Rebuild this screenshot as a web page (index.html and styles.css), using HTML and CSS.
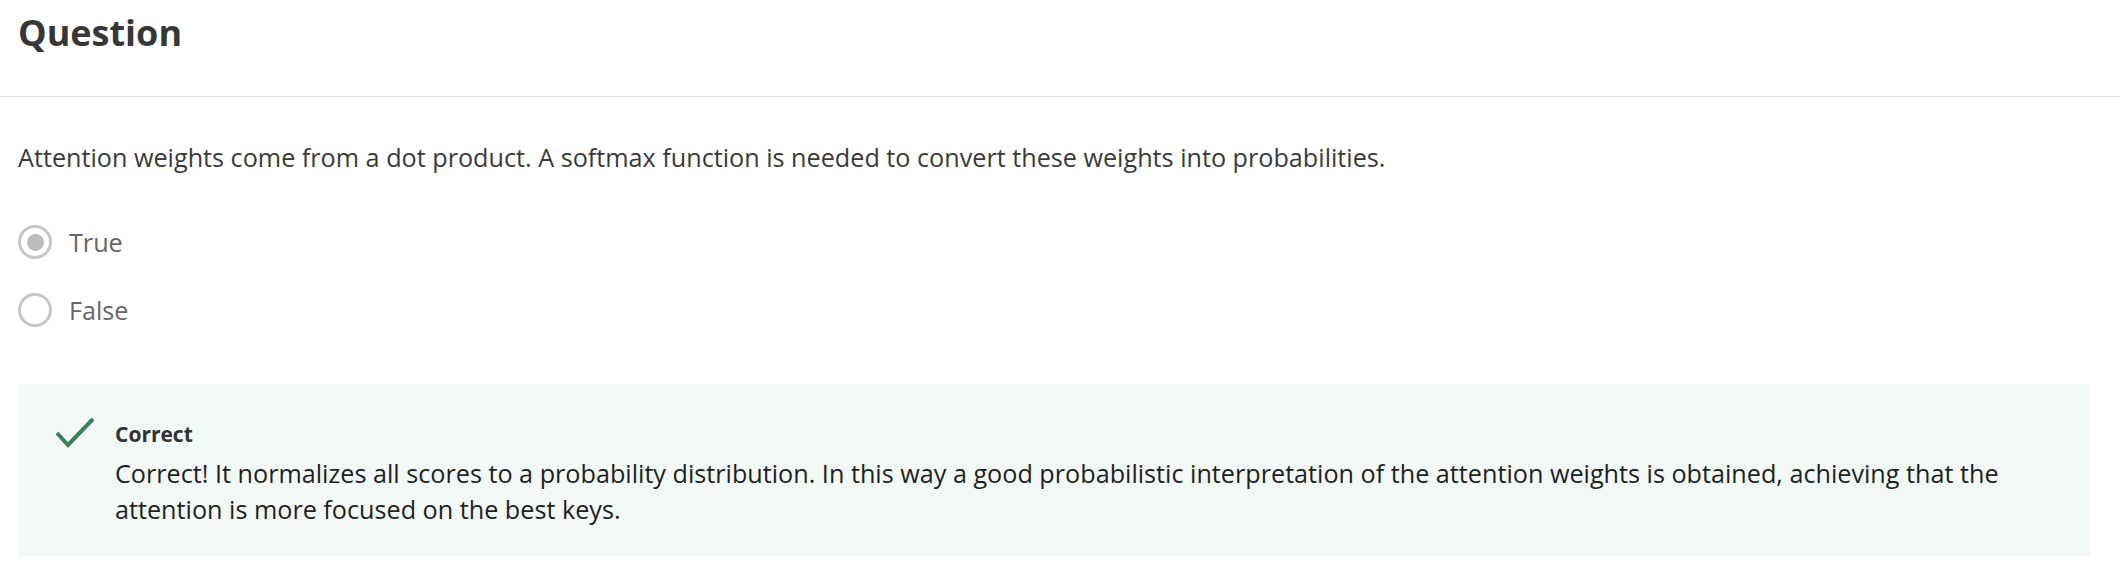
FILE: index.html
```html
<!DOCTYPE html>
<html lang="en">
<head>
<meta charset="utf-8">
<title>Question</title>
<link rel="stylesheet" href="styles.css">
</head>
<body>
<header class="header">
  <h1 class="title">Question</h1>
</header>
<main class="content">
  <p class="prompt">Attention weights come from a dot product. A softmax function is needed to convert these weights into probabilities.</p>
  <div class="options">
    <label class="option">
      <span class="radio radio-checked"><span class="radio-dot"></span></span>
      <span class="option-label">True</span>
    </label>
    <label class="option">
      <span class="radio"></span>
      <span class="option-label">False</span>
    </label>
  </div>
  <div class="feedback">
    <svg class="check" width="40" height="32" viewBox="0 0 40 32" aria-hidden="true">
      <path d="M2 17 L13 29 L38 3" fill="none" stroke="#3d805a" stroke-width="4"/>
    </svg>
    <div class="feedback-body">
      <div class="feedback-title">Correct</div>
      <div class="feedback-text">Correct! It normalizes all scores to a probability distribution. In this way a good probabilistic interpretation of the attention weights is obtained, achieving that the attention is more focused on the best keys.</div>
    </div>
  </div>
</main>
</body>
</html>
```
FILE: styles.css
```css
* { box-sizing: border-box; }
html, body { margin: 0; padding: 0; background: #fff; }
body {
  font-family: "Open Sans", "Noto Sans", sans-serif;
  color: #333;
}
.header {
  padding: 10px 18px 41px;
  border-bottom: 1px solid #e1e1e1;
}
.title {
  margin: 0;
  font-size: 36px;
  line-height: 45px;
  font-weight: 700;
  color: #373737;
}
.content {
  padding: 0 30px 0 18px;
}
.prompt {
  margin: 44px 0 0;
  font-size: 25.2px;
  line-height: 33px;
  color: #3a3a3a;
}
.options {
  margin-top: 51px;
  display: flex;
  flex-direction: column;
  gap: 34px;
}
.option {
  display: flex;
  align-items: center;
  gap: 17px;
}
.radio {
  width: 34px;
  height: 34px;
  border-radius: 50%;
  border: 3px solid #c6c6c6;
  display: flex;
  align-items: center;
  justify-content: center;
  flex: none;
}
.radio-dot {
  width: 17px;
  height: 17px;
  border-radius: 50%;
  background: #bdbdbd;
}
.option-label {
  font-size: 25.2px;
  line-height: 33px;
  color: #666;
}
.feedback {
  margin-top: 57px;
  background: #f2f8f6;
  padding: 32px 40px 29px 37px;
  display: flex;
  align-items: flex-start;
  gap: 20px;
}
.check { flex: none; display: block; }
.feedback-body { margin-top: 4px; }
.feedback-title {
  font-size: 21px;
  line-height: 28px;
  font-weight: 700;
  color: #333;
  margin-bottom: 7px;
}
.feedback-text {
  font-size: 25.2px;
  line-height: 36px;
  color: #1f1f1f;
}
```
